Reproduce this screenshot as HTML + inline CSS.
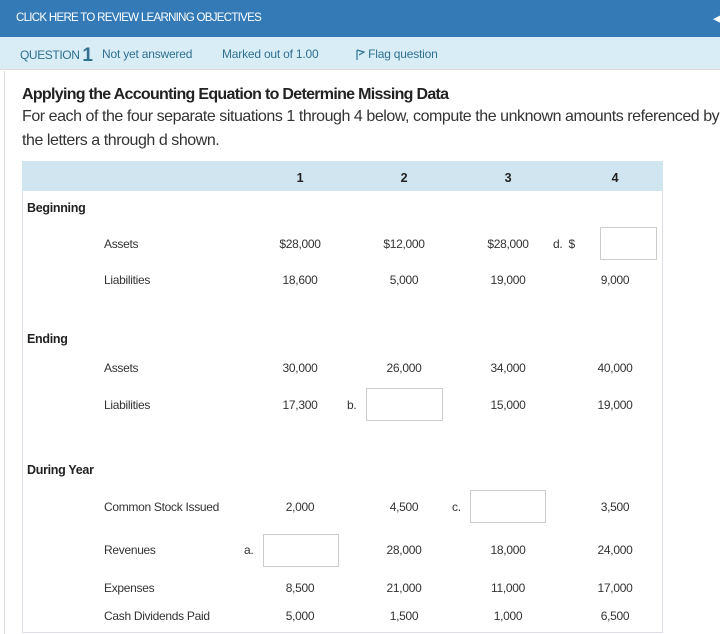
<!DOCTYPE html><html><head><style>
*{margin:0;padding:0;box-sizing:border-box}
body{width:720px;height:634px;background:#fff;font-family:"Liberation Sans",sans-serif;position:relative;overflow:hidden;color:#333}
.a{position:absolute;white-space:nowrap}
.s{font-size:12px;letter-spacing:-0.3px;color:#333}
.n{font-size:12px;letter-spacing:-0.3px;width:80px;text-align:center;color:#333}
.b{font-weight:bold;font-size:12.5px;letter-spacing:-0.3px;color:#222}
.box{position:absolute;border:1px solid #ccc;background:#fff}
</style></head><body>
<div class="a" style="left:0;top:0;width:720px;height:37px;background:#337ab7"></div>
<div class="a" style="left:16px;top:12px;color:#fff;font-size:11.5px;letter-spacing:-0.7px">CLICK HERE TO REVIEW LEARNING OBJECTIVES</div>
<div class="a" style="left:713px;top:12px;color:#fff;font-size:11px">◀</div>
<div class="a" style="left:0;top:37px;width:720px;height:33px;background:#d9edf7;border-bottom:1px solid #e6d8d8"></div>
<div class="a" style="left:20px;top:45px;font-size:12px;color:#31708f;letter-spacing:-0.4px">QUESTION <span style="font-size:19px;font-weight:bold;vertical-align:-2px">1</span></div>
<div class="a" style="left:102px;top:47px;font-size:12px;color:#31708f;letter-spacing:-0.2px">Not yet answered</div>
<div class="a" style="left:222px;top:47px;font-size:12px;color:#31708f;letter-spacing:-0.2px">Marked out of 1.00</div>
<div class="a" style="left:356px;top:47px;font-size:12px;color:#31708f;letter-spacing:-0.2px"><svg width="9" height="11" viewBox="0 0 9 11" style="vertical-align:-2px"><path d="M1 1v10M1 1l7 2-5 3" stroke="#31708f" fill="none" stroke-width="1.2"/></svg> Flag question</div>
<div class="a" style="left:4px;top:71px;width:1px;height:563px;background:#ddd"></div>
<div class="a" style="left:22px;top:86px;font-size:16px;font-weight:bold;color:#222;letter-spacing:-0.7px">Applying the Accounting Equation to Determine Missing Data</div>
<div class="a" style="left:22px;top:108px;font-size:16px;color:#333;letter-spacing:-0.45px">For each of the four separate situations 1 through 4 below, compute the unknown amounts referenced by</div>
<div class="a" style="left:22px;top:132px;font-size:16px;color:#333;letter-spacing:-0.45px">the letters a through d shown.</div>
<div class="a" style="left:22px;top:161px;width:641px;height:472px;border:1px solid #dde;border-top:none"></div>
<div class="a" style="left:22px;top:161px;width:641px;height:30px;background:#d0e5ef"></div>
<div class="a b n" style="left:260px;top:171px">1</div>
<div class="a b n" style="left:364px;top:171px">2</div>
<div class="a b n" style="left:468px;top:171px">3</div>
<div class="a b n" style="left:575px;top:171px">4</div>
<div class="a b" style="left:27px;top:201px">Beginning</div>
<div class="a s" style="left:104px;top:237px">Assets</div>
<div class="a n" style="left:260px;top:237px">$28,000</div>
<div class="a n" style="left:364px;top:237px">$12,000</div>
<div class="a n" style="left:468px;top:237px">$28,000</div>
<div class="a s" style="left:553px;top:237px">d.&nbsp; $</div>
<div class="box" style="left:600px;top:227px;width:57px;height:33px"></div>
<div class="a s" style="left:104px;top:273px">Liabilities</div>
<div class="a n" style="left:260px;top:273px">18,600</div>
<div class="a n" style="left:364px;top:273px">5,000</div>
<div class="a n" style="left:468px;top:273px">19,000</div>
<div class="a n" style="left:575px;top:273px">9,000</div>
<div class="a b" style="left:27px;top:332px">Ending</div>
<div class="a s" style="left:104px;top:361px">Assets</div>
<div class="a n" style="left:260px;top:361px">30,000</div>
<div class="a n" style="left:364px;top:361px">26,000</div>
<div class="a n" style="left:468px;top:361px">34,000</div>
<div class="a n" style="left:575px;top:361px">40,000</div>
<div class="a s" style="left:104px;top:398px">Liabilities</div>
<div class="a n" style="left:260px;top:398px">17,300</div>
<div class="a s" style="left:347px;top:398px">b.</div>
<div class="box" style="left:366px;top:388px;width:77px;height:33px"></div>
<div class="a n" style="left:468px;top:398px">15,000</div>
<div class="a n" style="left:575px;top:398px">19,000</div>
<div class="a b" style="left:27px;top:463px">During Year</div>
<div class="a s" style="left:104px;top:500px">Common Stock Issued</div>
<div class="a n" style="left:260px;top:500px">2,000</div>
<div class="a n" style="left:364px;top:500px">4,500</div>
<div class="a s" style="left:452px;top:500px">c.</div>
<div class="box" style="left:470px;top:490px;width:76px;height:33px"></div>
<div class="a n" style="left:575px;top:500px">3,500</div>
<div class="a s" style="left:104px;top:543px">Revenues</div>
<div class="a s" style="left:244px;top:543px">a.</div>
<div class="box" style="left:263px;top:534px;width:76px;height:33px"></div>
<div class="a n" style="left:364px;top:543px">28,000</div>
<div class="a n" style="left:468px;top:543px">18,000</div>
<div class="a n" style="left:575px;top:543px">24,000</div>
<div class="a s" style="left:104px;top:581px">Expenses</div>
<div class="a n" style="left:260px;top:581px">8,500</div>
<div class="a n" style="left:364px;top:581px">21,000</div>
<div class="a n" style="left:468px;top:581px">11,000</div>
<div class="a n" style="left:575px;top:581px">17,000</div>
<div class="a s" style="left:104px;top:609px">Cash Dividends Paid</div>
<div class="a n" style="left:260px;top:609px">5,000</div>
<div class="a n" style="left:364px;top:609px">1,500</div>
<div class="a n" style="left:468px;top:609px">1,000</div>
<div class="a n" style="left:575px;top:609px">6,500</div>
</body></html>
